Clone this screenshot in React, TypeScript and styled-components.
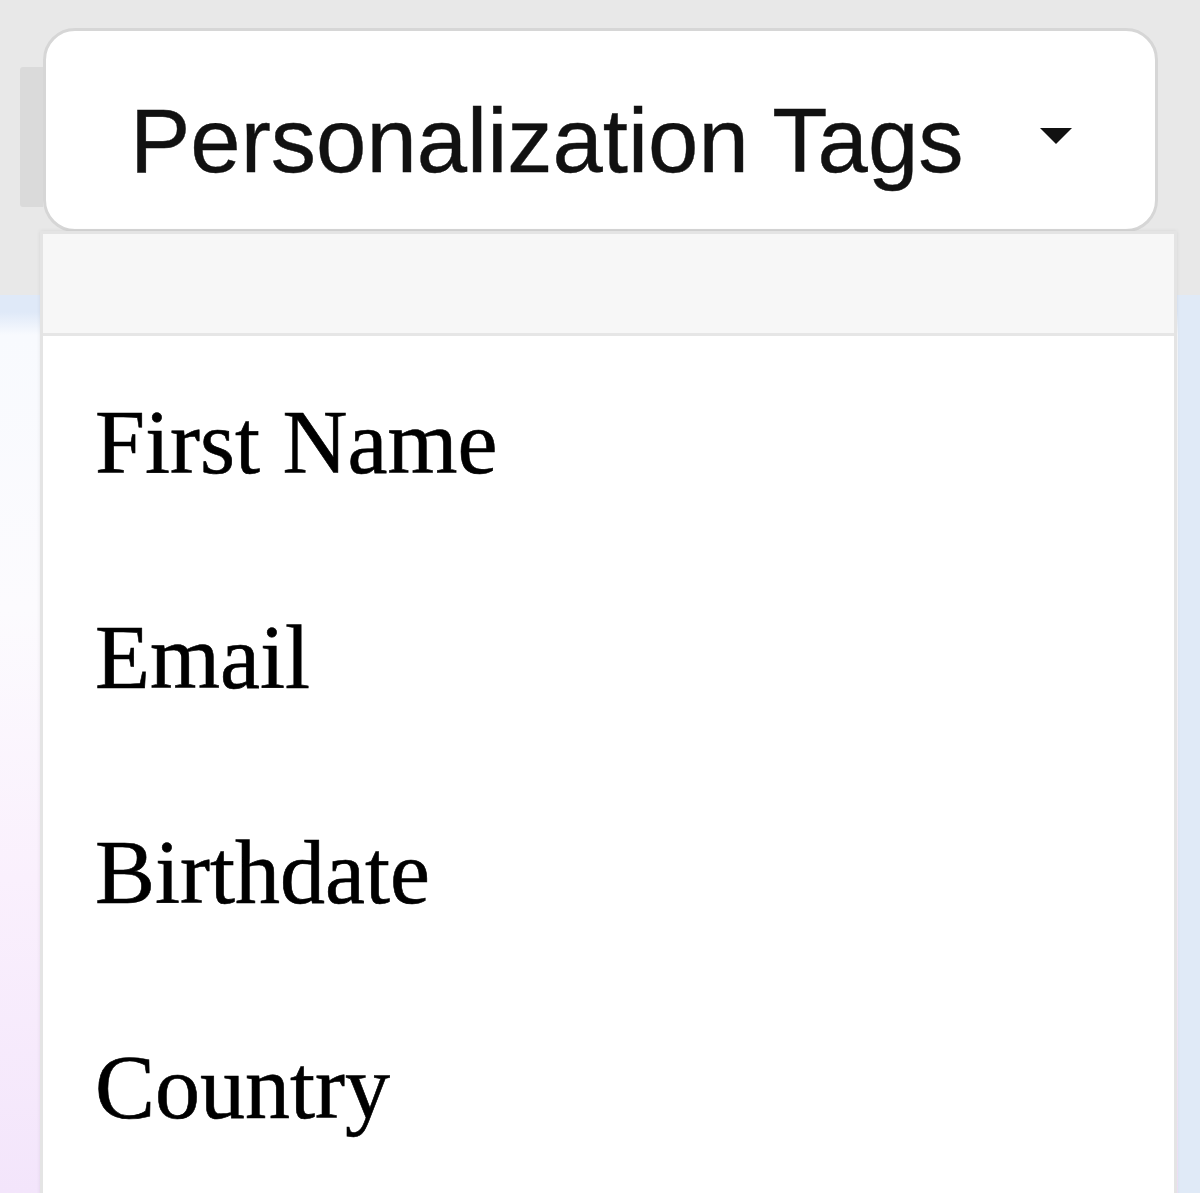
import React, { FC, ReactElement } from 'react';
import styled, { createGlobalStyle } from 'styled-components';

const GlobalStyle = createGlobalStyle`
  html, body {
    margin: 0;
    padding: 0;
    height: 100%;
    overflow: hidden;
  }
  body {
    font-family: "Liberation Serif", "Times New Roman", serif;
    background: #ffffff;
  }
`;

const Page = styled.div`
  position: relative;
  display: flex;
  flex-direction: column;
  width: 1200px;
  height: 1193px;
  overflow: hidden;
`;

const TopBar = styled.div`
  display: flex;
  align-items: flex-start;
  height: 295px;
  padding: 28px 0 0 20px;
  box-sizing: border-box;
  background: #e8e8e8;
`;

const SideTab = styled.div`
  width: 23px;
  height: 140px;
  margin-top: 39px;
  background: #dadada;
  border-radius: 3px 0 0 3px;
`;

const Toggle = styled.button`
  display: flex;
  align-items: center;
  width: 1115px;
  height: 204px;
  padding: 22px 83px 0 84px;
  box-sizing: border-box;
  background: #ffffff;
  border: 3px solid #d6d6d6;
  border-radius: 32px;
  font-family: "Liberation Sans", Arial, sans-serif;
  font-size: 90.5px;
  line-height: 1;
  color: #111111;
  -webkit-text-stroke: 0.4px #111111;
  cursor: pointer;
`;

const Label = styled.span`
  flex: 1;
  text-align: left;
  white-space: nowrap;
`;

const Caret = styled.span`
  width: 0;
  height: 0;
  margin-bottom: 10px;
  border-top: 16px solid #111111;
  border-left: 16px solid transparent;
  border-right: 16px solid transparent;
`;

const Content = styled.div`
  flex: 1;
  display: flex;
`;

const LeftPane = styled.div`
  flex: 1;
  background: linear-gradient(
    to bottom,
    #dfe9f8 0,
    #dfe9f8 17px,
    #f8fafe 40px,
    #fcfbfe 35%,
    #faf0fd 65%,
    #f3e5fb 100%
  );
`;

const RightPane = styled.div`
  width: 22px;
  background: #e0eaf7;
`;

const Menu = styled.div`
  position: absolute;
  left: 40px;
  top: 231px;
  width: 1137px;
  height: 1000px;
  box-sizing: border-box;
  background: #ffffff;
  border: 3px solid #e4e4e4;
  box-shadow: 0 0 4px rgba(0, 0, 0, 0.08);
`;

const MenuHeader = styled.div`
  height: 99px;
  background: #f7f7f7;
  border-bottom: 3px solid #e6e6e6;
`;

const MenuItem = styled.div`
  height: 215px;
  padding-left: 52px;
  font-family: "Liberation Serif", "Times New Roman", serif;
  font-size: 90px;
  line-height: 213px;
  color: #000000;
  -webkit-text-stroke: 0.6px #000000;
  white-space: nowrap;
`;

const tags = ['First Name', 'Email', 'Birthdate', 'Country'];

const App: FC = (): ReactElement => (
  <>
    <GlobalStyle />
    <Page>
      <TopBar>
        <SideTab />
        <Toggle type="button">
          <Label>Personalization Tags</Label>
          <Caret />
        </Toggle>
      </TopBar>
      <Content>
        <LeftPane />
        <RightPane />
      </Content>
      <Menu>
        <MenuHeader />
        {tags.map((tag) => (
          <MenuItem key={tag}>{tag}</MenuItem>
        ))}
      </Menu>
    </Page>
  </>
);

export default App;
